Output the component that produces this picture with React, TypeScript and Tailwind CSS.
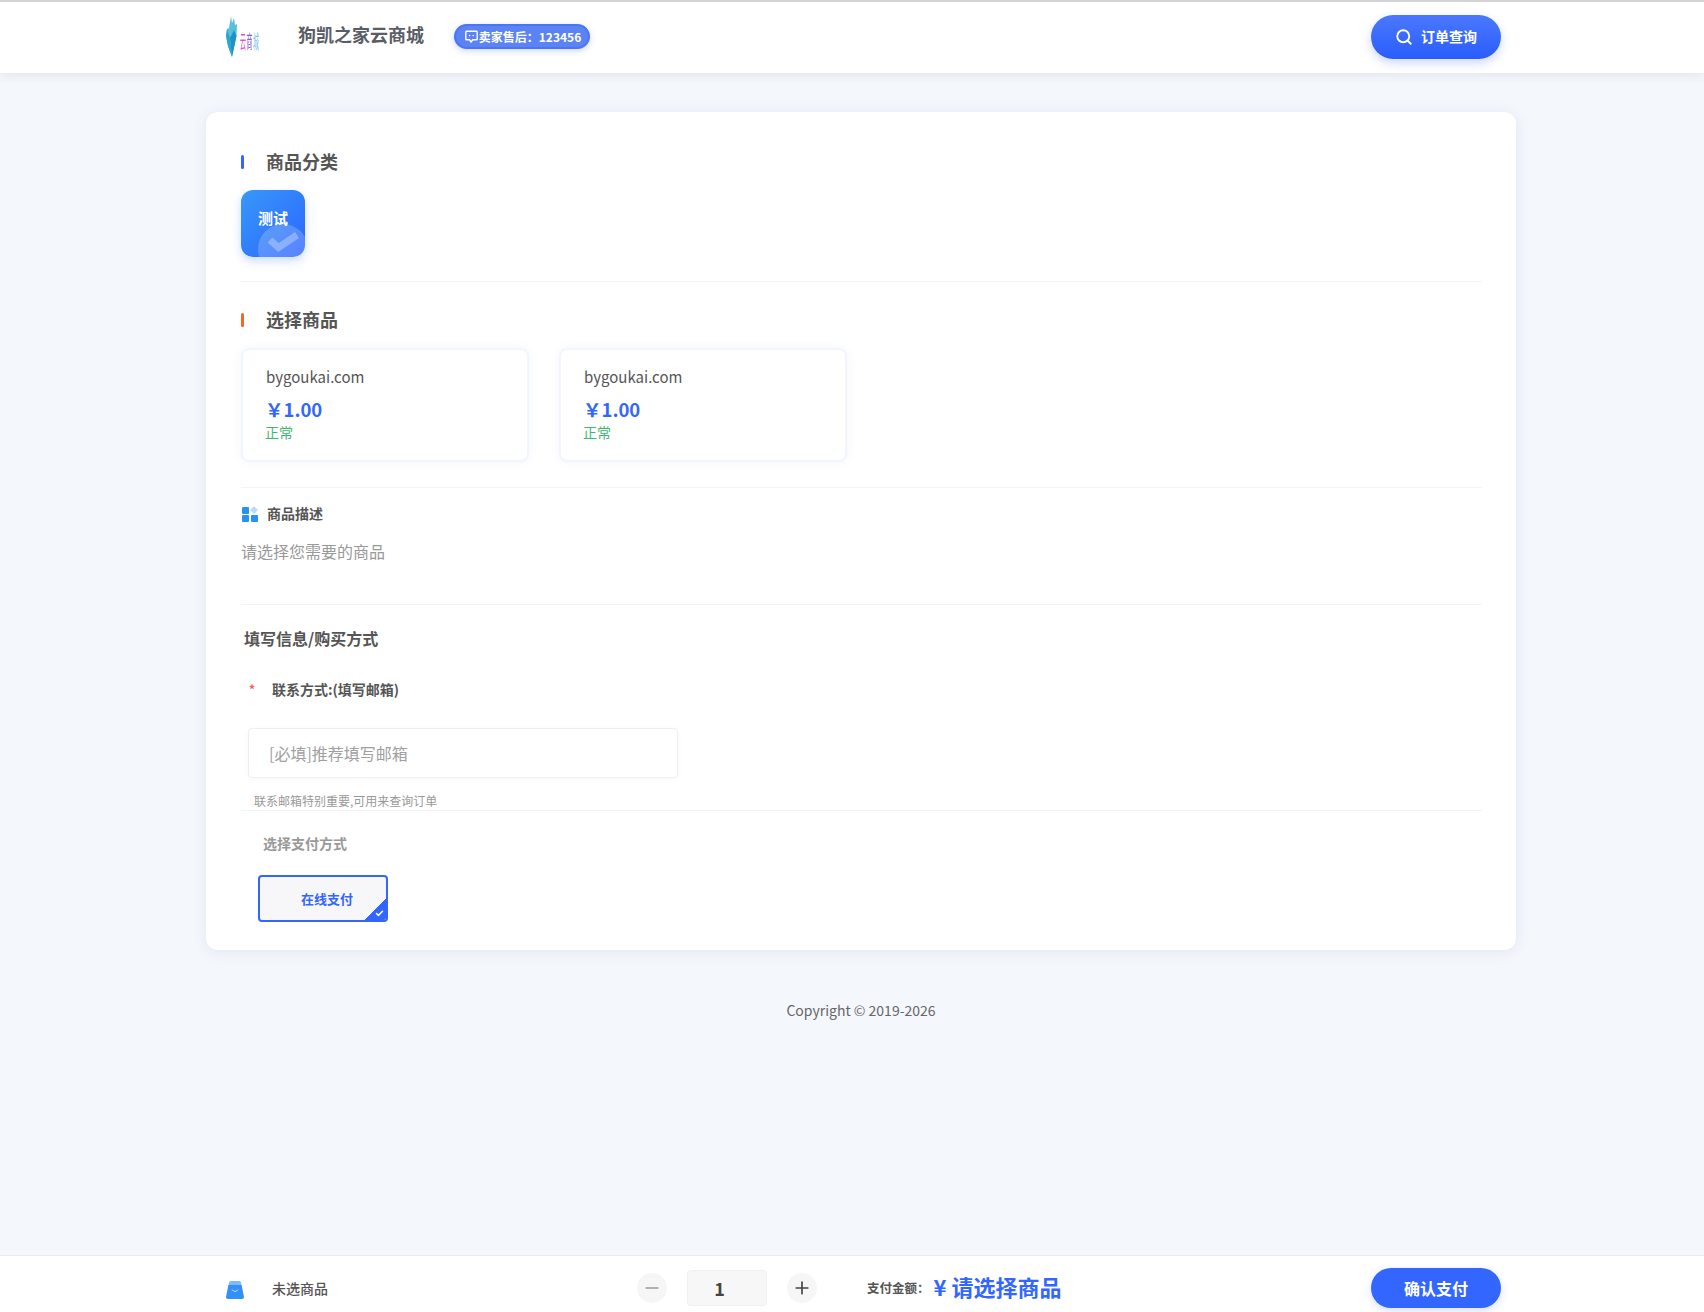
import { Search, Check, Minus, Plus } from "lucide-react";

function Logo() {
  return (
    <svg width="36" height="42" viewBox="0 0 36 42" className="shrink-0">
      <defs>
        <filter id="soft">
          <feGaussianBlur stdDeviation="0.45" />
        </filter>
      </defs>
      <g filter="url(#soft)">
        <polygon points="7,0 8,7 10,2 11,9 13,8 12.5,20 8,41 4,30 2,20 3,13 5,12" fill="#58c0dc" />
        <polygon points="8,41 6,22 10,14 12.5,20" fill="#1c93c4" />
        <polygon points="3,13 6,22 8,41 4,30 2,20" fill="#2aa6cf" />
        <text transform="translate(16 33) scale(0.85 2.7)" fontSize="7" fill="#dc4fd2" fontFamily="Noto Sans CJK SC">
          云
        </text>
        <text transform="translate(22.5 33) scale(0.85 2.7)" fontSize="7" fill="#8a58e0" fontFamily="Noto Sans CJK SC">
          商
        </text>
        <text transform="translate(29 33) scale(0.85 2.7)" fontSize="7" fill="#7cc0ea" fontFamily="Noto Sans CJK SC">
          城
        </text>
      </g>
    </svg>
  );
}

function ChatIcon() {
  return (
    <svg width="13" height="13" viewBox="0 0 13 13" className="shrink-0">
      <path d="M1.6 1.2 H11.4 Q12.2 1.2 12.2 2 V9 Q12.2 9.8 11.4 9.8 H7.8 L6 12 L4.6 9.8 H1.6 Q0.8 9.8 0.8 9 V2 Q0.8 1.2 1.6 1.2 Z" fill="none" stroke="#fff" strokeWidth="1.4" />
      <circle cx="4.6" cy="5.5" r="0.8" fill="#fff" />
      <circle cx="8.2" cy="5.5" r="0.8" fill="#fff" />
    </svg>
  );
}

function SectionTitle({ title, color }: { title: string; color: string }) {
  return (
    <div className="flex items-center h-6">
      <span className={`w-[3px] h-[14px] rounded-sm mr-[22px] ${color}`} />
      <h2 className="text-[18px] font-bold text-[#555] pb-[2px]">{title}</h2>
    </div>
  );
}

function Divider({ className }: { className: string }) {
  return <div className={`h-px bg-[#f3f4f7] ${className}`} />;
}

function GoodsCard() {
  return (
    <div className="w-[288px] h-[114px] rounded-lg border-2 border-[#f2f5fd] bg-white shadow-[0_0_10px_rgba(80,110,200,0.07)] pl-[23px] pt-[15px]">
      <div className="text-[15px] leading-6 text-[#555]">bygoukai.com</div>
      <div className="mt-2 -ml-[1px] text-[18.5px] leading-6 font-bold text-[#3366ff]">￥1.00</div>
      <div className="mt-px -ml-[1px] text-[14px] leading-5 text-[#3dba6f]">正常</div>
    </div>
  );
}

function BagIcon() {
  return (
    <svg width="18" height="18" viewBox="0 0 18 18" className="shrink-0 mt-1">
      <path d="M3 1.5 Q3.2 0 5 0 H13 Q14.8 0 15 1.5 L15.5 5 H2.5 Z" fill="#7cbcfb" />
      <path d="M2.4 4 H15.6 L18 16 Q18 18 16 18 H2 Q0 18 0 16 Z" fill="#3390fb" />
      <path d="M6 8.5 Q9 12.5 12 8.5" fill="none" stroke="#cfe6ff" strokeWidth="1" />
    </svg>
  );
}

function GridIcon() {
  return (
    <svg width="16" height="16" viewBox="0 0 16 16" className="shrink-0 mt-px ml-px">
      <rect x="0" y="1" width="7" height="7" rx="1" fill="#2793f0" />
      <rect x="0" y="9" width="7" height="7" rx="1" fill="#2793f0" />
      <rect x="9" y="9" width="7" height="7" rx="1" fill="#2793f0" />
      <rect x="9.2" y="1.2" width="5.6" height="5.6" rx="1" transform="rotate(45 12 4)" fill="#b5dcfb" />
    </svg>
  );
}

export default function App() {
  return (
    <div className="h-screen flex flex-col bg-[#f4f7fc] text-[#555] font-['Noto_Sans_CJK_SC',_sans-serif] overflow-hidden">
      <header className="h-[73px] shrink-0 bg-white border-t-2 border-[#d4d4d6] shadow-[0_2px_10px_rgba(60,70,100,0.1)] flex items-center pl-[224px] pr-[203px] pb-[2px]">
        <Logo />
        <span className="ml-[38px] pb-1 text-[18px] font-bold text-[#5a5d66]">狗凯之家云商城</span>
        <span className="ml-[30px] h-[25px] w-[136px] rounded-full border-2 border-[#4a76f5] bg-[#5b83f3] shadow-[0_2px_6px_rgba(60,100,240,0.25)] flex items-center justify-center gap-px pl-[2px] text-[12px] font-bold text-white">
          <ChatIcon />
          卖家售后：123456
        </span>
        <button className="ml-auto w-[130px] h-11 rounded-full bg-gradient-to-b from-[#4a78fd] to-[#2a5cfb] shadow-[0_4px_10px_rgba(50,100,255,0.25)] flex items-center justify-center gap-2 text-[14px] font-bold text-white">
          <Search size={18} strokeWidth={2.5} />
          订单查询
        </button>
      </header>

      <main className="flex-1 pl-[206px] pt-[39px]">
        <section className="w-[1310px] rounded-xl bg-white shadow-[0_2px_14px_rgba(70,90,150,0.1)] pl-[35px] pr-[34px] pt-[38px] pb-[28px]">
          <SectionTitle title="商品分类" color="bg-[#3366ff]" />
          <div className="relative mt-4 w-16 h-[67px] rounded-xl overflow-hidden bg-gradient-to-br from-[#3a98f8] to-[#2f62ff] shadow-[0_4px_10px_rgba(50,120,255,0.25)] flex justify-center pt-4 text-[15px] leading-6 font-bold text-white">
            测试
            <div className="absolute left-[17px] top-[34px] w-[50px] h-[50px] rounded-full bg-white/20" />
            <svg width="64" height="67" viewBox="0 0 64 67" className="absolute left-0 top-0">
              <path d="M29 50 L37.5 57.5 L56 45" fill="none" stroke="#fff" strokeOpacity="0.3" strokeWidth="7" />
            </svg>
          </div>
          <Divider className="mt-6" />

          <div className="mt-[26px]">
            <SectionTitle title="选择商品" color="bg-[#f2682a]" />
          </div>
          <div className="mt-4 flex gap-[30px]">
            <GoodsCard />
            <GoodsCard />
          </div>
          <Divider className="mt-[25px]" />

          <div className="mt-[15px] h-5 flex items-center gap-[9px] text-[14px] font-bold">
            <GridIcon />
            商品描述
          </div>
          <p className="mt-4 text-[16px] leading-6 text-[#999]">请选择您需要的商品</p>
          <Divider className="mt-[41px]" />

          <h3 className="mt-[21px] ml-[3px] text-[16px] leading-6 font-bold">填写信息/购买方式</h3>
          <div className="mt-[29px] ml-[8px] h-5 flex items-center text-[14px] font-bold">
            <span className="w-5 text-[12px] text-[#f55]">*</span>
            <span className="ml-[3px]">联系方式:(填写邮箱)</span>
          </div>
          <input
            placeholder="[必填]推荐填写邮箱"
            className="mt-[29px] ml-[7px] block w-[430px] h-[50px] rounded border border-[#eeeff2] bg-white pl-5 text-[16px] shadow-[0_1px_6px_rgba(0,0,0,0.03)] placeholder:text-[#a0a0a0] outline-none"
          />
          <p className="mt-[15px] ml-[13px] h-4 text-[12px] leading-4 text-[#999]">联系邮箱特别重要,可用来查询订单</p>
          <Divider className="mt-px" />

          <div className="mt-[22px] ml-[22px] h-5 text-[14px] leading-5 font-bold text-[#999]">选择支付方式</div>
          <div className="relative mt-[22px] ml-[17px] w-[130px] h-[47px] rounded border-2 border-[#3366ff] bg-[#f7f7f9] overflow-hidden flex items-center justify-center pl-[8px] text-[13px] font-bold text-[#3366ff]">
            在线支付
            <div className="absolute right-0 bottom-0 w-[21px] h-[21px] bg-[linear-gradient(135deg,transparent_50%,#3366ff_50%)]" />
            <Check size={9} strokeWidth={4} className="absolute right-[2px] bottom-[2px] text-white" />
          </div>
        </section>
        <p className="w-[1310px] mt-[50px] text-center text-[14px] leading-5 text-[#666]">Copyright © 2019-2026</p>
      </main>

      <footer className="h-[57px] shrink-0 bg-white border-t border-[#e8ebf1] flex items-center pl-[226px] pr-[203px] pt-2">
        <BagIcon />
        <span className="ml-7 w-[91px] text-[14px] font-medium">未选商品</span>
        <div className="ml-[274px] w-[30px] h-[30px] rounded-full bg-[#f6f6f6] flex items-center justify-center text-[#999]">
          <Minus size={20} strokeWidth={2} />
        </div>
        <div className="ml-5 w-20 h-9 rounded border border-[#f0f0f0] bg-[#f7f7f7] flex items-center justify-center pr-[15px] text-[18px] font-bold text-[#444]">1</div>
        <div className="ml-5 w-[30px] h-[30px] rounded-full bg-[#f6f6f6] flex items-center justify-center text-[#444]">
          <Plus size={20} strokeWidth={2} />
        </div>
        <span className="ml-[50px] text-[12.5px] font-bold text-[#555]">支付金额：</span>
        <span className="ml-[4px] -mt-[3px] text-[22px] font-bold text-[#3366ff]">¥ 请选择商品</span>
        <button className="ml-auto w-[130px] h-10 rounded-full bg-[#3366ff] shadow-[0_3px_8px_rgba(50,100,255,0.2)] text-[16px] font-bold text-white">确认支付</button>
      </footer>
    </div>
  );
}
